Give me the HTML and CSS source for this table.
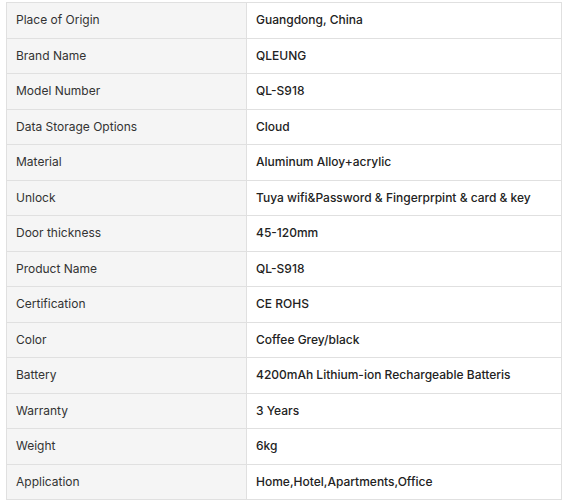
FILE: index.html
```html
<!DOCTYPE html>
<html>
<head>
<meta charset="utf-8">
<link rel="stylesheet" href="styles.css">
</head>
<body>
<table class="spec">
<tbody>
<tr><td class="k">Place of Origin</td><td class="v">Guangdong, China</td></tr>
<tr><td class="k">Brand Name</td><td class="v">QLEUNG</td></tr>
<tr><td class="k">Model Number</td><td class="v">QL-S918</td></tr>
<tr><td class="k">Data Storage Options</td><td class="v">Cloud</td></tr>
<tr><td class="k">Material</td><td class="v">Aluminum Alloy+acrylic</td></tr>
<tr><td class="k">Unlock</td><td class="v">Tuya wifi&amp;Password &amp; Fingerprpint &amp; card &amp; key</td></tr>
<tr><td class="k">Door thickness</td><td class="v">45-120mm</td></tr>
<tr><td class="k">Product Name</td><td class="v">QL-S918</td></tr>
<tr><td class="k">Certification</td><td class="v">CE ROHS</td></tr>
<tr><td class="k">Color</td><td class="v">Coffee Grey/black</td></tr>
<tr><td class="k">Battery</td><td class="v">4200mAh Lithium-ion Rechargeable Batteris</td></tr>
<tr><td class="k">Warranty</td><td class="v">3 Years</td></tr>
<tr><td class="k">Weight</td><td class="v">6kg</td></tr>
<tr><td class="k">Application</td><td class="v">Home,Hotel,Apartments,Office</td></tr>
</tbody>
</table>
</body>
</html>
```
FILE: styles.css
```css
html, body { margin: 0; padding: 0; background: #fff; }
body { padding: 2px 4px 0 6px; font-family: Inter, "Noto Sans", sans-serif; }
.spec {
  border-collapse: collapse;
  width: 556px;
  table-layout: fixed;
}
.spec td {
  border: 1px solid #e0e0e0;
  padding: 8px 9px;
  font-size: 12px;
  line-height: 18.5px;
  vertical-align: middle;
}
.spec td.k {
  width: 221px;
  background: #f5f5f5;
  color: #333;
}
.spec td.v {
  color: #222;
  font-weight: 500;
}
```
